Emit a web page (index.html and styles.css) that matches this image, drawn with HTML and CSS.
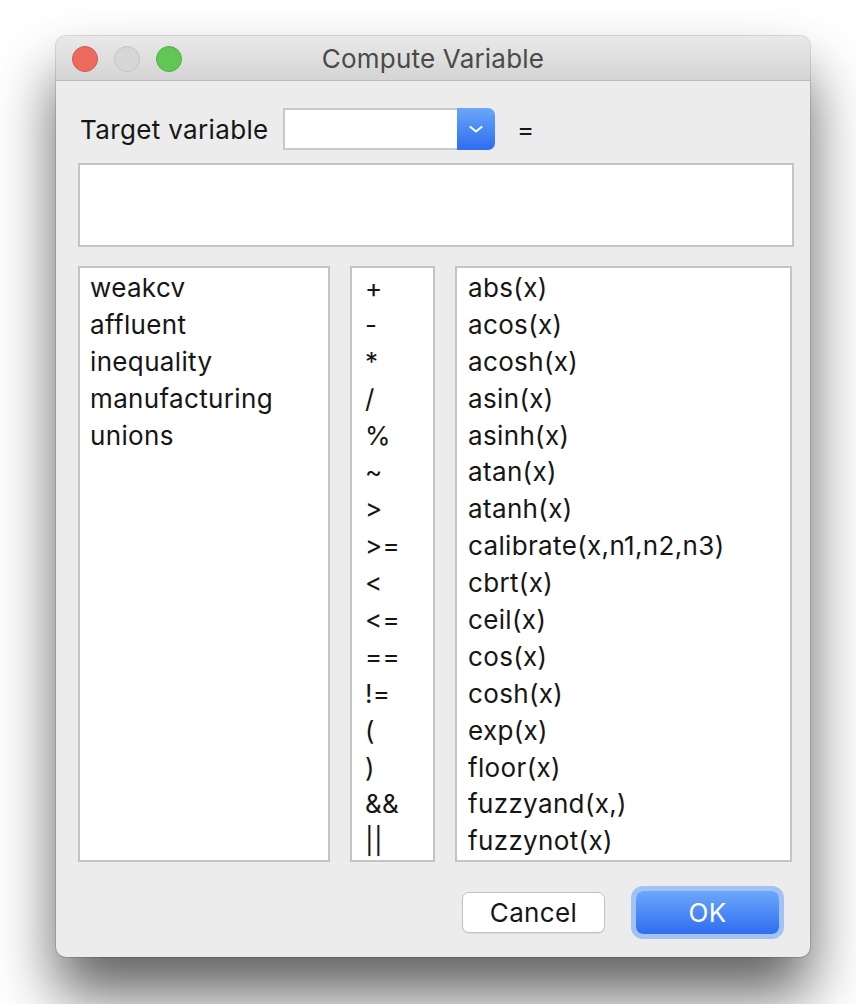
FILE: index.html
```html
<!DOCTYPE html>
<html>
<head>
<meta charset="utf-8">
<link rel="stylesheet" href="styles.css">
</head>
<body>
<div class="window">
  <div class="titlebar">
    <div class="lights">
      <span class="light red"></span>
      <span class="light gray"></span>
      <span class="light green"></span>
    </div>
    <div class="title">Compute Variable</div>
  </div>
  <div class="content">
    <div class="target-row">
      <span class="label">Target variable</span>
      <div class="combo">
        <div class="combo-field"></div>
        <div class="combo-btn">
          <svg width="16" height="10" viewBox="0 0 16 10"><path d="M2.5 3 L8 7.5 L13.5 3" fill="none" stroke="#fff" stroke-width="2" stroke-linecap="round" stroke-linejoin="round"/></svg>
        </div>
      </div>
      <span class="equals">=</span>
    </div>
    <div class="expr"></div>
    <div class="lists">
      <ul class="list vars">
        <li>weakcv</li>
        <li>affluent</li>
        <li>inequality</li>
        <li>manufacturing</li>
        <li>unions</li>
      </ul>
      <ul class="list ops">
        <li>+</li>
        <li>-</li>
        <li>*</li>
        <li>/</li>
        <li>%</li>
        <li>~</li>
        <li>&gt;</li>
        <li>&gt;=</li>
        <li>&lt;</li>
        <li>&lt;=</li>
        <li>==</li>
        <li>!=</li>
        <li>(</li>
        <li>)</li>
        <li>&amp;&amp;</li>
        <li>||</li>
      </ul>
      <ul class="list funcs">
        <li>abs(x)</li>
        <li>acos(x)</li>
        <li>acosh(x)</li>
        <li>asin(x)</li>
        <li>asinh(x)</li>
        <li>atan(x)</li>
        <li>atanh(x)</li>
        <li>calibrate(x,n1,n2,n3)</li>
        <li>cbrt(x)</li>
        <li>ceil(x)</li>
        <li>cos(x)</li>
        <li>cosh(x)</li>
        <li>exp(x)</li>
        <li>floor(x)</li>
        <li>fuzzyand(x,)</li>
        <li>fuzzynot(x)</li>
      </ul>
    </div>
    <div class="buttons">
      <button class="btn cancel">Cancel</button>
      <button class="btn ok">OK</button>
    </div>
  </div>
</div>
</body>
</html>
```
FILE: styles.css
```css
html, body {
  margin: 0;
  padding: 0;
  background: #ffffff;
}
body {
  width: 856px;
  height: 1004px;
  overflow: hidden;
  padding: 36px 0 0 56px;
  box-sizing: border-box;
  font-family: "Inter", "Liberation Sans", sans-serif;
  font-size: 26px;
  letter-spacing: 0.35px;
  color: #161616;
}
.window {
  width: 754px;
  height: 921px;
  background: #ececec;
  border-radius: 10px;
  box-shadow: 0 0 0 1px rgba(0,0,0,0.13), 0 38px 60px rgba(0,0,0,0.62);
  overflow: hidden;
  display: flex;
  flex-direction: column;
}
.titlebar {
  height: 44px;
  flex: none;
  background: linear-gradient(#e9e9e9, #d4d4d4);
  border-bottom: 1px solid #bdbdbd;
  position: relative;
  display: flex;
  align-items: center;
  justify-content: center;
}
.lights {
  position: absolute;
  left: 16px;
  top: 10px;
  display: flex;
  gap: 16px;
}
.light {
  width: 24px;
  height: 24px;
  border-radius: 50%;
  border: 1px solid;
}
.red { background: #ec6b5f; border-color: #d5564b; }
.gray { background: #d6d6d6; border-color: #c4c4c4; }
.green { background: #62c655; border-color: #53aa44; }
.title {
  color: #4a4a4a;
  font-size: 26px;
  letter-spacing: 0.2px;
}
.content {
  flex: 1;
  padding: 27px 16px 0 22px;
  display: flex;
  flex-direction: column;
}
.target-row {
  height: 42px;
  display: flex;
  align-items: center;
}
.label {
  margin-left: 2px;
  width: 203px;
}
.combo {
  width: 212px;
  height: 42px;
  display: flex;
}
.combo-field {
  flex: 1;
  background: #fff;
  border: 2px solid #c9c9c9;
  border-right: none;
  box-sizing: border-box;
}
.combo-btn {
  width: 38px;
  background: linear-gradient(#6aa7f8, #2f6cf0);
  border-radius: 0 7px 7px 0;
  display: flex;
  align-items: center;
  justify-content: center;
}
.combo-btn svg { display: block; }
.equals {
  margin-left: 22px;
}
.expr {
  margin-top: 13px;
  height: 84px;
  background: #fff;
  border: 2px solid #c4c4c4;
  box-sizing: border-box;
  width: 716px;
}
.lists {
  margin-top: 19px;
  height: 596px;
  display: flex;
  gap: 20px;
}
.list {
  list-style: none;
  margin: 0;
  padding: 2px 0 0 0;
  background: #fff;
  border: 2px solid #c4c4c4;
  box-sizing: border-box;
  height: 100%;
  overflow: hidden;
}
.list li {
  line-height: 36.9px;
  height: 36.9px;
  white-space: nowrap;
}
.vars { width: 252px; }
.vars li { padding-left: 10px; }
.ops { width: 85px; }
.ops li { padding-left: 13px; }
.funcs { width: 337px; }
.funcs li { padding-left: 11px; }
.buttons {
  margin-top: 29px;
  display: flex;
  align-items: center;
  padding-left: 384px;
}
.btn {
  font-family: inherit;
  font-size: 26px;
  letter-spacing: 0.35px;
  margin: 0;
  padding: 0;
  box-sizing: border-box;
  cursor: default;
}
.cancel {
  width: 143px;
  height: 41px;
  background: #fff;
  color: #161616;
  border: 1px solid #c2c2c2;
  border-radius: 7px;
  box-shadow: 0 1px 1px rgba(0,0,0,0.08);
}
.ok {
  margin-left: 31px;
  width: 143px;
  height: 43px;
  color: #fff;
  border: none;
  border-radius: 7px;
  background: linear-gradient(#6ca8f9, #2f6df1);
  box-shadow: 0 0 0 5px rgba(100, 160, 250, 0.55);
}
```
